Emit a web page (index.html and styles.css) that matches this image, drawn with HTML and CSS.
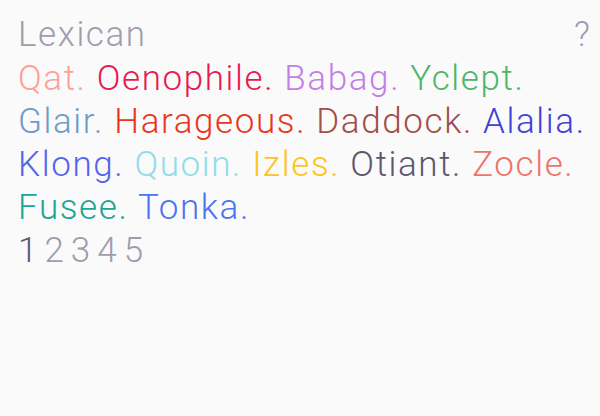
FILE: index.html
```html
<!DOCTYPE html>
<html lang="en">
<head>
<meta charset="utf-8">
<title>Lexican</title>
<link rel="stylesheet" href="styles.css">
</head>
<body>
<div class="app">
  <header class="top">
    <h1 class="title">Lexican</h1>
    <a class="help" href="#">?</a>
  </header>
  <main class="words">
    <div class="line"><span class="w qat">Qat.</span> <span class="w oenophile">Oenophile.</span> <span class="w babag">Babag.</span> <span class="w yclept">Yclept.</span></div>
    <div class="line"><span class="w glair">Glair.</span> <span class="w harageous">Harageous.</span> <span class="w daddock">Daddock.</span> <span class="w alalia">Alalia.</span></div>
    <div class="line"><span class="w klong">Klong.</span> <span class="w quoin">Quoin.</span> <span class="w izles">Izles.</span> <span class="w otiant">Otiant.</span> <span class="w zocle">Zocle.</span></div>
    <div class="line"><span class="w fusee">Fusee.</span> <span class="w tonka">Tonka.</span></div>
  </main>
  <nav class="pages">
    <a class="page current" href="#">1</a>
    <a class="page" href="#">2</a>
    <a class="page" href="#">3</a>
    <a class="page" href="#">4</a>
    <a class="page" href="#">5</a>
  </nav>
</div>
</body>
</html>
```
FILE: styles.css
```css
html, body {
  margin: 0;
  padding: 0;
  background: #fafafa;
}
body {
  font-family: Roboto, "Liberation Sans", sans-serif;
  font-weight: 300;
  font-size: 35px;
  line-height: 43px;
  letter-spacing: 1.6px;
}
.app {
  padding: 13px 10px 0 18px;
  display: flex;
  flex-direction: column;
}
.top {
  display: flex;
  justify-content: space-between;
  align-items: baseline;
}
.title {
  margin: 0;
  font-size: inherit;
  font-weight: 300;
  color: #a09cad;
}
.help {
  color: #a09cad;
  text-decoration: none;
  letter-spacing: 0;
}
.words {
  display: flex;
  flex-direction: column;
  margin-top: 1px;
}
.line {
  white-space: nowrap;
}
.qat { color: #ff9f9a; }
.oenophile { color: #e8194f; }
.babag { color: #c47ee8; }
.yclept { color: #4db66a; }
.glair { color: #6f9bc8; }
.harageous { color: #e8361c; }
.daddock { color: #a04e4a; }
.alalia { color: #4040d8; }
.klong { color: #5264ee; }
.quoin { color: #90dde8; }
.izles { color: #ffc41a; }
.otiant { color: #5c566e; }
.zocle { color: #ee7468; }
.fusee { color: #1aa597; }
.tonka { color: #4a74f0; }
.pages {
  display: flex;
  gap: 7px;
  letter-spacing: 0;
}
.page {
  color: #a09cad;
  text-decoration: none;
}
.page.current {
  color: #5c566e;
}
```
